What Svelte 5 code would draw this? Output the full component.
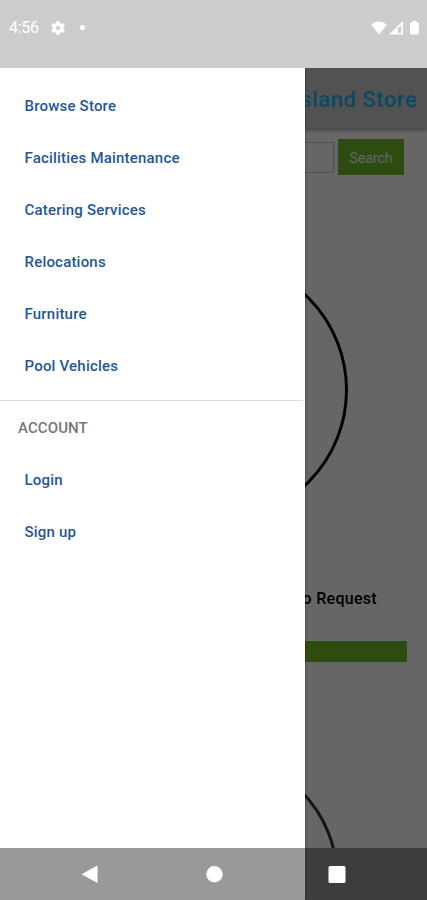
<script lang="ts">
    const services = [
        "Browse Store",
        "Facilities Maintenance",
        "Catering Services",
        "Relocations",
        "Furniture",
        "Pool Vehicles",
    ];
    const account = ["Login", "Sign up"];
</script>

<div class="phone">
    <div class="status">
        <span class="time">4:56</span>
        <svg class="gear" width="14" height="14" viewBox="2 2 20 20">
            <path fill="#fff" stroke="#fff" stroke-width=".6" d="M19.14 12.94c.04-.3.06-.61.06-.94s-.02-.64-.07-.94l2.03-1.58a.49.49 0 0 0 .12-.61l-1.92-3.32a.49.49 0 0 0-.59-.22l-2.39.96a7 7 0 0 0-1.62-.94l-.36-2.54A.48.48 0 0 0 13.92 2.4h-3.84a.48.48 0 0 0-.47.41l-.36 2.54a7.3 7.3 0 0 0-1.62.94l-2.39-.96a.48.48 0 0 0-.59.22L2.74 8.87a.48.48 0 0 0 .12.61l2.03 1.58a6 6 0 0 0 0 1.88l-2.03 1.58a.49.49 0 0 0-.12.61l1.92 3.32c.12.22.37.29.59.22l2.39-.96c.5.38 1.03.7 1.62.94l.36 2.54c.05.24.24.41.48.41h3.84c.24 0 .44-.17.47-.41l.36-2.54a7 7 0 0 0 1.62-.94l2.39.96c.22.08.47 0 .59-.22l1.92-3.32a.48.48 0 0 0-.12-.61zM12 15.3a3.3 3.3 0 1 1 0-6.6 3.3 3.3 0 0 1 0 6.6z"/>
        </svg>
        <span class="dot"></span>
        <svg class="signals" width="50" height="16" viewBox="0 0 50 16">
            <path fill="#fff" d="M1 4.5Q9 -1.5 17 4.500L9 14.5z"/>
            <path fill="#fff" fill-rule="evenodd" d="M19 14.5L33 1V14.5zM28 8.200L31.300 5V13H28z"/>
            <path fill="#fff" d="M42.500 2.500V1h4v1.500h1q1.500 0 1.500 1.500V13q0 1.500-1.500 1.500h-6q-1.500 0-1.500-1.500V4q0-1.500 1.500-1.500z"/>
        </svg>
    </div>

    <main class="store">
        <header>Island Store</header>
        <div class="searchRow">
            <input type="text" aria-label="Search">
            <button>Search</button>
        </div>
        <svg class="circle" width="270" height="270" viewBox="0 0 270 270">
            <circle cx="135" cy="135" r="130.500" fill="none" stroke="#000" stroke-width="3"/>
        </svg>
        <h2>How To Request</h2>
        <div class="banner"></div>
        <svg class="circle second" width="252" height="252" viewBox="0 0 252 252">
            <circle cx="126" cy="126" r="123" fill="none" stroke="#333" stroke-width="3"/>
        </svg>
    </main>

    <div class="scrim">
        <nav class="drawer">
            <ul>
                {#each services as item}
                    <li>{item}</li>
                {/each}
            </ul>
            <hr>
            <h3>ACCOUNT</h3>
            <ul>
                {#each account as item}
                    <li>{item}</li>
                {/each}
            </ul>
        </nav>
    </div>

    <div class="navbar">
        <svg width="20" height="20" viewBox="0 0 20 20"><path fill="#fff" d="M17.5 1.500V19L1.500 10.200z"/></svg>
        <svg width="20" height="20" viewBox="0 0 20 20"><circle cx="10.500" cy="10.300" r="8.200" fill="#fff"/></svg>
        <svg width="20" height="20" viewBox="0 0 20 20"><rect x="1.500" y="2" width="17" height="17" rx="1.500" fill="#fff"/></svg>
    </div>
</div>

<style>
    :global(body){
        margin: 0;
    }

    .phone{
        position: relative;
        width: 427px;
        height: 900px;
        overflow: hidden;
        background-color: #fff;
        font-family: Roboto, sans-serif;
    }

    .status{
        display: flex;
        align-items: center;
        box-sizing: border-box;
        height: 68px;
        padding: 0 7px 13px 9px;
        background-color: #ccc;
        color: #fff;
    }

    .time{
        width: 42px;
        font-size: 16px;
        letter-spacing: -.3px;
    }

    .dot{
        width: 5px;
        height: 5px;
        margin-left: 15px;
        border-radius: 50%;
        background-color: #fff;
    }

    .signals{
        margin-left: auto;
    }

    .store{
        display: flex;
        flex-direction: column;
        align-items: center;
        height: 780px;
        overflow: hidden;
    }

    header{
        flex: none;
        box-sizing: border-box;
        width: 100%;
        height: 61px;
        padding-right: 10px;
        line-height: 64px;
        text-align: right;
        font-size: 22px;
        font-weight: 500;
        letter-spacing: .5px;
        background-color: #cdcdcd;
        color: #20b4f4;
        box-shadow: 0 1px 3px #999;
    }

    .searchRow{
        display: flex;
        flex: none;
        align-items: center;
        align-self: stretch;
        gap: 4px;
        height: 36px;
        margin: 10px 23px 0 20px;
    }

    input{
        flex: 1;
        box-sizing: border-box;
        height: 31px;
        border: 1px solid #c8c8c8;
        background: none;
    }

    button{
        width: 66px;
        height: 36px;
        padding: 2px 0 0;
        border: none;
        background-color: #76be28;
        color: #fff;
        font-family: Roboto, sans-serif;
        font-size: 14px;
    }

    .circle{
        flex: none;
        margin: 80px 0 0 4px;
    }

    h2{
        flex: none;
        align-self: flex-end;
        margin: 63px 50px 0 0;
        line-height: 22px;
        font-size: 16px;
        font-weight: 500;
        letter-spacing: .3px;
        color: #000;
    }

    .banner{
        flex: none;
        align-self: stretch;
        height: 21px;
        margin: 31px 20px 0;
        background-color: #76be28;
    }

    .second{
        margin: 90px 0 0;
    }

    .scrim{
        position: absolute;
        top: 68px;
        right: 0;
        bottom: 0;
        left: 0;
        overflow: hidden;
        background-color: rgba(0, 0, 0, .6);
    }

    .drawer{
        box-sizing: border-box;
        width: 305px;
        height: 100%;
        padding-top: 11px;
        background-color: #fff;
        box-shadow: 0 0 2px rgba(0, 0, 0, .5);
    }

    ul{
        margin: 0;
        padding: 0;
        list-style: none;
    }

    li{
        height: 52px;
        padding-left: 24.5px;
        line-height: 54px;
        font-size: 15px;
        font-weight: 500;
        letter-spacing: .2px;
        color: #1f5796;
    }

    hr{
        height: 1px;
        margin: 9px 2px 0 0;
        border: none;
        background-color: #ddd;
    }

    h3{
        margin: 0;
        padding-left: 18px;
        height: 52px;
        line-height: 54px;
        font-size: 15px;
        font-weight: 500;
        letter-spacing: .1px;
        color: #777;
    }

    .navbar{
        position: absolute;
        right: 0;
        bottom: 0;
        left: 0;
        display: flex;
        align-items: center;
        justify-content: space-between;
        box-sizing: border-box;
        height: 52px;
        padding: 0 80px;
        background-color: rgba(0, 0, 0, .4);
    }
</style>
